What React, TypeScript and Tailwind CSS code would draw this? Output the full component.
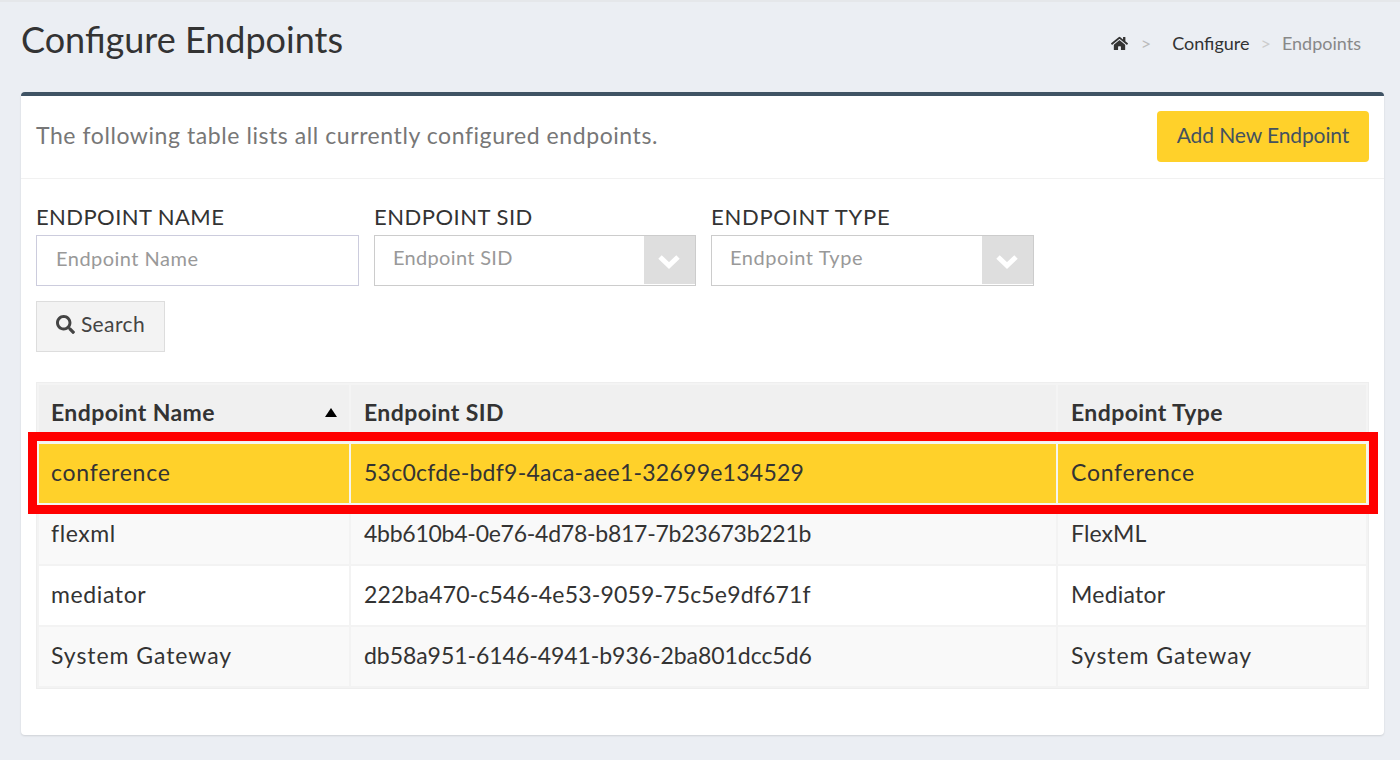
import React from 'react';
import { FaHome, FaSearch } from 'react-icons/fa';

// tracking per cell: the installed font's digits and letters run at other widths than the page's
const rows = [
  { name: 'flexml', sid: '4bb610b4-0e76-4d78-b817-7b23673b221b', type: 'FlexML', bg: 'bg-[#f9f9f9]', nameTrack: 'tracking-[0.6px]', sidTrack: 'tracking-[-0.25px]', typeTrack: 'tracking-[0.1px]' },
  { name: 'mediator', sid: '222ba470-c546-4e53-9059-75c5e9df671f', type: 'Mediator', bg: 'bg-white', nameTrack: 'tracking-[0.62px]', sidTrack: 'tracking-[0.17px]', typeTrack: 'tracking-[0.25px]' },
  { name: 'System Gateway', sid: 'db58a951-6146-4941-b936-2ba801dcc5d6', type: 'System Gateway', bg: 'bg-[#f9f9f9]', nameTrack: 'tracking-[0.95px]', sidTrack: 'tracking-[-0.05px]', typeTrack: 'tracking-[0.95px]' },
];

const SelectBox: React.FC<{ label: string; width: string; labelTrack: string; textTrack: string }> = ({ label, width, labelTrack, textTrack }) => {
  return (
    <div className={width}>
      <div className={`h-[31px] text-[22px] leading-[26px] text-[#333] ${labelTrack}`}>{label.toUpperCase()}</div>
      <div className="flex h-[51px] border border-[#ccc] bg-white pl-[18px]">
        <span className={`flex-1 text-[20px] leading-[43px] text-[#999] ${textTrack}`}>{label}</span>
        <span className="flex h-[48px] w-[51px] items-center justify-center bg-[#dedede]">
          <svg width="24" height="16" viewBox="0 0 24 16" className="ml-[-2px] mt-[3px]">
            <polyline points="3,3 12,11.5 21,3" fill="none" stroke="#fff" strokeWidth="5" />
          </svg>
        </span>
      </div>
    </div>
  );
};

export default function App() {
  return (
    <div className="h-[760px] overflow-hidden border-t-2 border-[#e5e7ea] bg-[#ebeef3] px-[21px] pr-[16px] font-['Lato',sans-serif] text-[#333]">
      <div className="flex h-[90px] justify-between">
        <h1 className="pt-[15px] text-[36px] leading-[44px] text-[#333]">Configure Endpoints</h1>
        <div className="flex h-fit items-center pt-[30px] pr-[23px] text-[18px] leading-[22px]">
          <FaHome className="text-[17px] text-[#333]" />
          <span className="ml-[13px] text-[#bbb]">&gt;</span>
          <span className="ml-[21px]">Configure</span>
          <span className="ml-[11px] text-[#ccc]">&gt;</span>
          <span className="ml-[11px] text-[#888]">Endpoints</span>
        </div>
      </div>

      <div className="h-[643px] rounded-[4px] border-t-4 border-[#3f5364] bg-white shadow-[0_1px_2px_rgba(0,0,0,0.12)]">
        <div className="flex h-[83px] items-center justify-between border-b border-[#f1f1f1] px-[15px] pb-[2px]">
          <p className="pb-[2px] text-[23px] tracking-[0.57px] text-[#777]">
            The following table lists all currently configured endpoints.
          </p>
          <button className="h-[51px] w-[212px] rounded-[4px] bg-[#ffd12a] pb-[3px] text-[21px] tracking-[-0.1px] text-[#44525f]">
            Add New Endpoint
          </button>
        </div>

        <div className="px-[15px] pt-[25px]">
          <div className="flex gap-[15px]">
            <div className="w-[323px]">
              <div className="h-[31px] text-[22px] leading-[26px] tracking-[0.42px] text-[#333]">ENDPOINT NAME</div>
              <div className="h-[51px] border border-[#ccd] bg-white pl-[19px] text-[20px] leading-[45px] tracking-[0.48px] text-[#999]">
                Endpoint Name
              </div>
            </div>
            <SelectBox label="Endpoint SID" width="w-[322px]" labelTrack="tracking-[0.5px]" textTrack="tracking-[0.32px]" />
            <SelectBox label="Endpoint Type" width="w-[323px]" labelTrack="tracking-[0.72px]" textTrack="tracking-[0.55px]" />
          </div>

          <button className="mt-[15px] flex h-[51px] w-[129px] items-center justify-center gap-[6px] border border-[#ddd] bg-[#f3f3f3] pb-[5px] text-[21px] tracking-[0.4px] text-[#444]">
            <FaSearch className="text-[19px]" />
            Search
          </button>

          <div className="relative mt-[30px] border border-[#eee]">
            <table className="w-full table-fixed border-collapse text-[23px]">
              <thead>
                <tr className="h-[59px] bg-[#f0f0f0] text-left tracking-[0.4px]">
                  <th className="relative w-[312px] border-2 border-[#f4f4f4] pb-[3px] pl-[12px] font-bold">
                    Endpoint Name
                    <span className="absolute right-[12px] top-[23px] h-0 w-0 border-x-[6px] border-b-[9px] border-x-transparent border-b-black" />
                  </th>
                  <th className="w-[707px] border-2 border-[#f4f4f4] pb-[3px] pl-[13px] font-bold">Endpoint SID</th>
                  <th className="border-2 border-[#f4f4f4] pb-[3px] pl-[13px] font-bold">Endpoint Type</th>
                </tr>
              </thead>
              <tbody>
                <tr className="h-[61px] bg-[#ffd12a]">
                  <td className="border-2 border-[#f5f5f0] pb-[3px] pl-[12px] tracking-[0.75px]">conference</td>
                  <td className="border-2 border-[#f5f5f0] pb-[3px] pl-[13px] tracking-[0.25px]">53c0cfde-bdf9-4aca-aee1-32699e134529</td>
                  <td className="border-2 border-[#f5f5f0] pb-[3px] pl-[13px] tracking-[0.75px]">Conference</td>
                </tr>
                {rows.map((row) => (
                  <tr key={row.name} className={`h-[61px] ${row.bg}`}>
                    <td className={`border-2 border-[#f3f3f3] pb-[3px] pl-[12px] ${row.nameTrack}`}>{row.name}</td>
                    <td className={`border-2 border-[#f3f3f3] pb-[3px] pl-[13px] ${row.sidTrack}`}>{row.sid}</td>
                    <td className={`border-2 border-[#f3f3f3] pb-[3px] pl-[13px] ${row.typeTrack}`}>{row.type}</td>
                  </tr>
                ))}
              </tbody>
            </table>
            {/* red highlight drawn over the first row */}
            <div className="pointer-events-none absolute left-[-9px] right-[-10px] top-[49px] h-[82px] border-[9px] border-[#ff0000]" />
          </div>
        </div>
      </div>
    </div>
  );
}
